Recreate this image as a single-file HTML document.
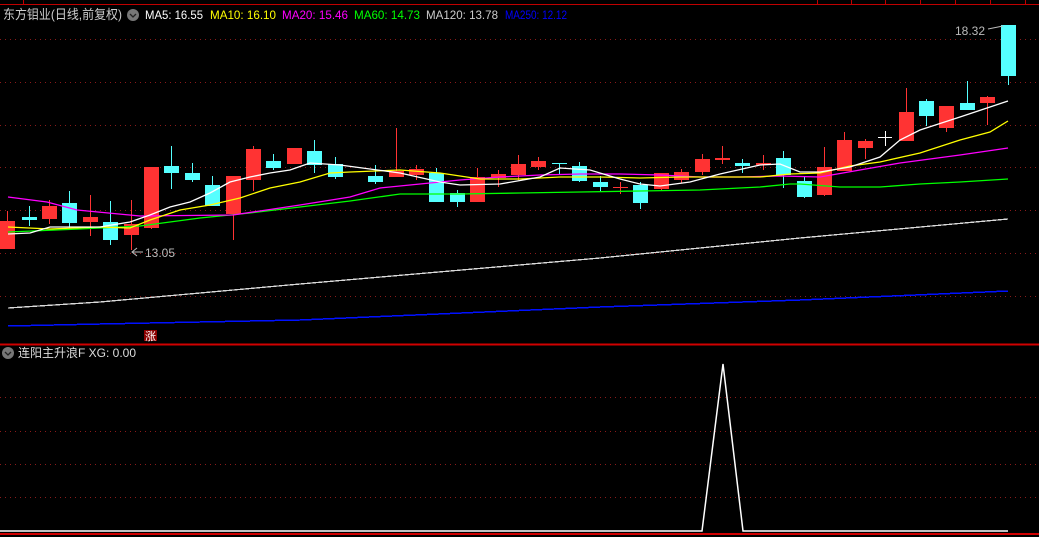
<!DOCTYPE html>
<html><head><meta charset="utf-8"><style>
html,body{margin:0;padding:0;background:#000;width:1039px;height:537px;overflow:hidden}
svg{display:block}
text{font-family:"Liberation Sans","Noto Sans CJK SC",sans-serif;font-size:12px}
</style></head><body>
<svg width="1039" height="537" viewBox="0 0 1039 537" xmlns="http://www.w3.org/2000/svg" shape-rendering="crispEdges">
<rect width="1039" height="537" fill="#000"/>
<!-- top border -->
<line x1="0" y1="4.5" x2="1039" y2="4.5" stroke="#c00000" stroke-width="1"/>
<g stroke="#c00000"><line x1="23.5" y1="0" x2="23.5" y2="4"/><line x1="817.5" y1="0" x2="817.5" y2="4"/><line x1="851.5" y1="0" x2="851.5" y2="4"/><line x1="885.5" y1="0" x2="885.5" y2="4"/><line x1="920.5" y1="0" x2="920.5" y2="4"/><line x1="955.5" y1="0" x2="955.5" y2="4"/><line x1="990.5" y1="0" x2="990.5" y2="4"/><line x1="1025.5" y1="0" x2="1025.5" y2="4"/></g>
<!-- grid -->
<g stroke="#8a1a1a" stroke-width="1" stroke-dasharray="1 4">
<line x1="0" y1="39.5" x2="1039" y2="39.5"/><line x1="0" y1="82.5" x2="1039" y2="82.5"/><line x1="0" y1="125.5" x2="1039" y2="125.5"/><line x1="0" y1="167.5" x2="1039" y2="167.5"/><line x1="0" y1="210.5" x2="1039" y2="210.5"/><line x1="0" y1="253.5" x2="1039" y2="253.5"/><line x1="0" y1="296.5" x2="1039" y2="296.5"/>
<line x1="0" y1="397.5" x2="1039" y2="397.5"/><line x1="0" y1="431.5" x2="1039" y2="431.5"/><line x1="0" y1="464.5" x2="1039" y2="464.5"/><line x1="0" y1="497.5" x2="1039" y2="497.5"/>
</g>
<line x1="0" y1="344.5" x2="1039" y2="344.5" stroke="#d00000" stroke-width="2"/>
<line x1="0" y1="534" x2="1039" y2="534" stroke="#d00000" stroke-width="2"/>

<!-- MA120 / MA250 -->
<polyline fill="none" stroke="#d8d8d8" stroke-width="1.3" points="8,308 100,302 300,284 600,258 800,238 1008,219"/>
<polyline fill="none" stroke="#0010ff" stroke-width="1.5" points="8,326 100,324 200,322 300,320 600,307 800,300 1008,291"/>

<!-- candles -->
<g id="c" shape-rendering="crispEdges">
<!-- red: fill #ff3333 ; cyan: #55ffff -->
<line x1="7.5" y1="211" x2="7.5" y2="249" stroke="#ff3333"/><rect x="0" y="221" width="15" height="28" fill="#ff3333"/>
<line x1="29.5" y1="206" x2="29.5" y2="226" stroke="#55ffff"/><rect x="22" y="217" width="15" height="3" fill="#55ffff"/>
<line x1="49.5" y1="200" x2="49.5" y2="224" stroke="#ff3333"/><rect x="42" y="206" width="15" height="13" fill="#ff3333"/>
<line x1="69.5" y1="191" x2="69.5" y2="228" stroke="#55ffff"/><rect x="62" y="203" width="15" height="20" fill="#55ffff"/>
<line x1="90.5" y1="195" x2="90.5" y2="236" stroke="#ff3333"/><rect x="83" y="217" width="15" height="5" fill="#ff3333"/>
<line x1="110.5" y1="201" x2="110.5" y2="245" stroke="#55ffff"/><rect x="103" y="222" width="15" height="18" fill="#55ffff"/>
<line x1="131.5" y1="200" x2="131.5" y2="250" stroke="#ff3333"/><rect x="124" y="224" width="15" height="11" fill="#ff3333"/>
<line x1="151.5" y1="167" x2="151.5" y2="229" stroke="#ff3333"/><rect x="144" y="167" width="15" height="61" fill="#ff3333"/>
<line x1="171.5" y1="146" x2="171.5" y2="189" stroke="#55ffff"/><rect x="164" y="166" width="15" height="7" fill="#55ffff"/>
<line x1="192.5" y1="163" x2="192.5" y2="182" stroke="#55ffff"/><rect x="185" y="173" width="15" height="7" fill="#55ffff"/>
<line x1="212.5" y1="176" x2="212.5" y2="206" stroke="#55ffff"/><rect x="205" y="185" width="15" height="21" fill="#55ffff"/>
<line x1="233.5" y1="176" x2="233.5" y2="240" stroke="#ff3333"/><rect x="226" y="176" width="15" height="38" fill="#ff3333"/>
<line x1="253.5" y1="146" x2="253.5" y2="191" stroke="#ff3333"/><rect x="246" y="149" width="15" height="31" fill="#ff3333"/>
<line x1="273.5" y1="154" x2="273.5" y2="170" stroke="#55ffff"/><rect x="266" y="161" width="15" height="7" fill="#55ffff"/>
<rect x="287" y="148" width="15" height="16" fill="#ff3333"/>
<line x1="314.5" y1="140" x2="314.5" y2="173" stroke="#55ffff"/><rect x="307" y="151" width="15" height="14" fill="#55ffff"/>
<line x1="335.5" y1="157" x2="335.5" y2="179" stroke="#55ffff"/><rect x="328" y="164" width="15" height="13" fill="#55ffff"/>
<line x1="375.5" y1="165" x2="375.5" y2="184" stroke="#55ffff"/><rect x="368" y="176" width="15" height="6" fill="#55ffff"/>
<line x1="396.5" y1="128" x2="396.5" y2="177" stroke="#ff3333"/><rect x="389" y="171" width="15" height="6" fill="#ff3333"/>
<line x1="416.5" y1="165" x2="416.5" y2="180" stroke="#ff3333"/><rect x="409" y="169" width="15" height="6" fill="#ff3333"/>
<line x1="436.5" y1="168" x2="436.5" y2="202" stroke="#55ffff"/><rect x="429" y="173" width="15" height="29" fill="#55ffff"/>
<line x1="457.5" y1="190" x2="457.5" y2="207" stroke="#55ffff"/><rect x="450" y="193" width="15" height="9" fill="#55ffff"/>
<line x1="477.5" y1="168" x2="477.5" y2="202" stroke="#ff3333"/><rect x="470" y="177" width="15" height="25" fill="#ff3333"/>
<line x1="498.5" y1="170" x2="498.5" y2="187" stroke="#ff3333"/><rect x="491" y="174" width="15" height="4" fill="#ff3333"/>
<line x1="518.5" y1="155" x2="518.5" y2="180" stroke="#ff3333"/><rect x="511" y="164" width="15" height="11" fill="#ff3333"/>
<line x1="538.5" y1="157" x2="538.5" y2="170" stroke="#ff3333"/><rect x="531" y="161" width="15" height="6" fill="#ff3333"/>
<line x1="559.5" y1="163" x2="559.5" y2="175" stroke="#55ffff"/><rect x="552" y="163" width="15" height="1" fill="#55ffff"/>
<line x1="579.5" y1="162" x2="579.5" y2="182" stroke="#55ffff"/><rect x="572" y="166" width="15" height="15" fill="#55ffff"/>
<line x1="600.5" y1="176" x2="600.5" y2="191" stroke="#55ffff"/><rect x="593" y="182" width="15" height="5" fill="#55ffff"/>
<line x1="620.5" y1="182" x2="620.5" y2="194" stroke="#ff3333"/><rect x="613" y="187" width="15" height="1" fill="#ff3333"/>
<line x1="640.5" y1="182" x2="640.5" y2="209" stroke="#55ffff"/><rect x="633" y="185" width="15" height="18" fill="#55ffff"/>
<line x1="661.5" y1="173" x2="661.5" y2="191" stroke="#ff3333"/><rect x="654" y="173" width="15" height="16" fill="#ff3333"/>
<line x1="681.5" y1="169" x2="681.5" y2="183" stroke="#ff3333"/><rect x="674" y="172" width="15" height="8" fill="#ff3333"/>
<line x1="702.5" y1="154" x2="702.5" y2="175" stroke="#ff3333"/><rect x="695" y="159" width="15" height="13" fill="#ff3333"/>
<line x1="722.5" y1="146" x2="722.5" y2="164" stroke="#ff3333"/><rect x="715" y="158" width="15" height="2" fill="#ff3333"/>
<line x1="742.5" y1="159" x2="742.5" y2="173" stroke="#55ffff"/><rect x="735" y="163" width="15" height="3" fill="#55ffff"/>
<line x1="763.5" y1="155" x2="763.5" y2="170" stroke="#ff3333"/><rect x="756" y="163" width="15" height="2" fill="#ff3333"/>
<line x1="783.5" y1="151" x2="783.5" y2="188" stroke="#55ffff"/><rect x="776" y="158" width="15" height="17" fill="#55ffff"/>
<line x1="804.5" y1="177" x2="804.5" y2="198" stroke="#55ffff"/><rect x="797" y="181" width="15" height="16" fill="#55ffff"/>
<line x1="824.5" y1="147" x2="824.5" y2="196" stroke="#ff3333"/><rect x="817" y="167" width="15" height="28" fill="#ff3333"/>
<line x1="844.5" y1="132" x2="844.5" y2="171" stroke="#ff3333"/><rect x="837" y="140" width="15" height="31" fill="#ff3333"/>
<line x1="865.5" y1="139" x2="865.5" y2="159" stroke="#ff3333"/><rect x="858" y="141" width="15" height="7" fill="#ff3333"/>
<line x1="885.5" y1="131" x2="885.5" y2="146" stroke="#ffffff"/><rect x="878" y="137" width="14" height="1" fill="#ffffff"/>
<line x1="906.5" y1="88" x2="906.5" y2="141" stroke="#ff3333"/><rect x="899" y="112" width="15" height="29" fill="#ff3333"/>
<line x1="926.5" y1="99" x2="926.5" y2="126" stroke="#55ffff"/><rect x="919" y="101" width="15" height="15" fill="#55ffff"/>
<line x1="946.5" y1="106" x2="946.5" y2="132" stroke="#ff3333"/><rect x="939" y="106" width="15" height="22" fill="#ff3333"/>
<line x1="967.5" y1="81" x2="967.5" y2="110" stroke="#55ffff"/><rect x="960" y="103" width="15" height="7" fill="#55ffff"/>
<line x1="987.5" y1="96" x2="987.5" y2="125" stroke="#ff3333"/><rect x="980" y="97" width="15" height="6" fill="#ff3333"/>
<line x1="1008.5" y1="25" x2="1008.5" y2="85" stroke="#55ffff"/><rect x="1001" y="25" width="15" height="51" fill="#55ffff"/>
</g>

<!-- MAs -->
<g fill="none" stroke-width="1.3" shape-rendering="auto">
<polyline stroke="#00ff00" points="8,232 80,229 140,226 200,218 250,213 300,207 350,201 400,194 460,194 520,193 580,192 640,191 700,190 760,187 790,184 800,184 840,187 880,187 920,184 960,182 1008,179"/>
<polyline stroke="#ff00ff" points="8,197 47,202 77,210 140,216 233,215 300,205 350,197 380,188 420,184 460,180 500,177 540,175 580,174 620,174 660,175 700,177 740,177 780,176 820,177 860,170 900,163 960,155 1008,148"/>
<polyline stroke="#ffff00" points="8,227 50,229 100,227 130,228 150,220 180,210 210,205 240,198 270,188 300,182 330,173 350,172 400,170 440,173 480,179 520,179 560,177 600,177 640,178 680,177 720,177 760,177 790,174 820,173 850,166 880,162 920,153 960,140 990,132 1008,121"/>
<polyline stroke="#ffffff" points="8,234 30,233 50,227 100,227 130,222 150,215 170,207 190,202 210,193 230,182 250,177 270,173 290,170 310,163 340,165 400,173 440,182 460,185 500,184 540,177 560,168 590,170 620,179 640,184 660,186 690,182 720,174 760,165 780,164 800,172 820,172 850,167 880,157 900,140 920,130 960,117 1008,101"/>
</g>

<!-- price labels -->
<g shape-rendering="auto">
<polyline points="137,248 132,252 137,256" fill="none" stroke="#bbb"/><line x1="132" y1="252" x2="143" y2="252" stroke="#bbb"/>
<text x="145" y="257" fill="#bbbbbb">13.05</text>
<text x="955" y="35" fill="#bbbbbb">18.32</text>
<line x1="988" y1="29" x2="1003" y2="26" stroke="#bbb"/>
</g>

<!-- 涨 marker -->
<rect x="144" y="330" width="13" height="11" fill="#8b0000"/>
<text x="145" y="340" fill="#fff" style="font-size:11px">涨</text>

<!-- header -->
<g shape-rendering="auto">
<text x="3" y="19" fill="#cccccc" style="font-size:13px" textLength="119" lengthAdjust="spacingAndGlyphs">东方钼业(日线,前复权)</text>
<circle cx="133" cy="15" r="6" fill="#777"/><polyline points="130,14 133,17 136,14" fill="none" stroke="#222" stroke-width="1.3"/>
<text x="145" y="19" fill="#ffffff" textLength="58" lengthAdjust="spacingAndGlyphs">MA5: 16.55</text>
<text x="210" y="19" fill="#ffff00" textLength="66" lengthAdjust="spacingAndGlyphs">MA10: 16.10</text>
<text x="282" y="19" fill="#ff00ff" textLength="66" lengthAdjust="spacingAndGlyphs">MA20: 15.46</text>
<text x="354" y="19" fill="#00ff00" textLength="66" lengthAdjust="spacingAndGlyphs">MA60: 14.73</text>
<text x="426" y="19" fill="#cccccc" textLength="72" lengthAdjust="spacingAndGlyphs">MA120: 13.78</text>
<text x="505" y="19" fill="#0000ff" textLength="62" lengthAdjust="spacingAndGlyphs">MA250: 12.12</text>

<circle cx="8" cy="353" r="6" fill="#777"/><polyline points="5,352 8,355 11,352" fill="none" stroke="#222" stroke-width="1.3"/>
<text x="18" y="357" fill="#dddddd" textLength="118" lengthAdjust="spacingAndGlyphs">连阳主升浪F  XG: 0.00</text>

<polyline fill="none" stroke="#ffffff" stroke-width="1.5" points="0,531 702,531 723,364 743,531 1008,531"/>
</g>
</svg>
</body></html>
